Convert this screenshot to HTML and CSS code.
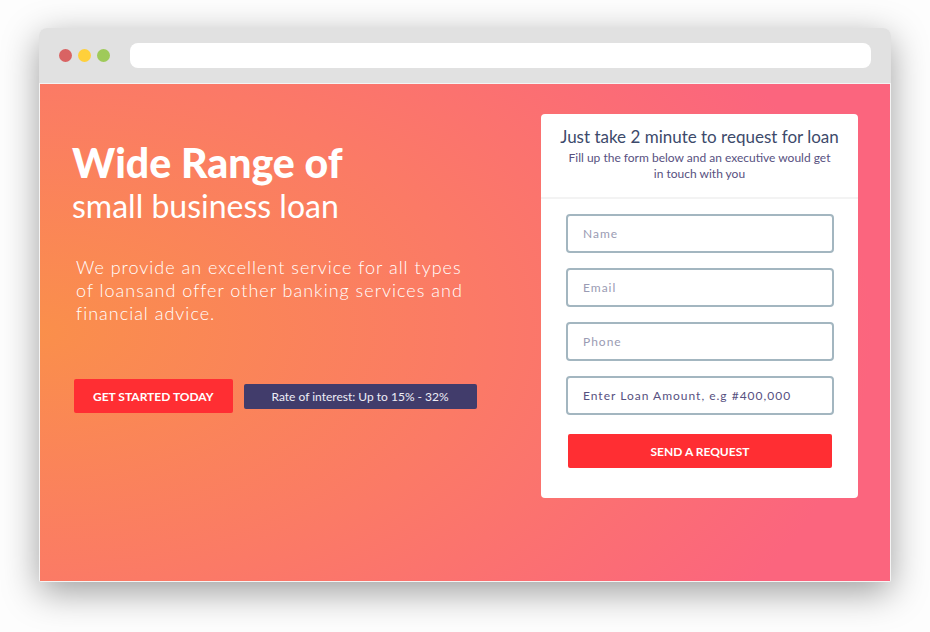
FILE: index.html
```html
<!DOCTYPE html>
<html lang="en">
<head>
<meta charset="utf-8">
<title>Small business loan</title>
<link rel="stylesheet" href="styles.css">
</head>
<body>
<div class="window">
  <header class="toolbar">
    <div class="lights">
      <span class="light light-close"></span>
      <span class="light light-minimize"></span>
      <span class="light light-expand"></span>
    </div>
    <input class="address" type="text" aria-label="Address">
  </header>
  <main class="hero">
    <section class="intro">
      <h1 class="title"><strong class="title-strong">Wide Range of</strong> small business loan</h1>
      <p class="lead">We provide an excellent service for all types<br>of loansand offer other banking services and<br>financial advice.</p>
      <div class="actions">
        <button class="button" type="button">GET STARTED TODAY</button>
        <p class="rate">Rate of interest: Up to 15% - 32%</p>
      </div>
    </section>
    <form class="card">
      <div class="card-head">
        <h2 class="card-title">Just take 2 minute to request for loan</h2>
        <p class="card-text">Fill up the form below and an executive would get in touch with you</p>
      </div>
      <div class="fields">
        <input class="field" type="text" placeholder="Name" aria-label="Name">
        <input class="field" type="email" placeholder="Email" aria-label="Email">
        <input class="field" type="tel" placeholder="Phone" aria-label="Phone">
        <input class="field field-amount" type="text" placeholder="Enter Loan Amount, e.g #400,000" aria-label="Loan amount">
        <button class="button button-send" type="submit">SEND A REQUEST</button>
      </div>
    </form>
  </main>
</div>
</body>
</html>
```
FILE: styles.css
```css
* {
  box-sizing: border-box;
}

body {
  display: flex;
  min-height: 100vh;
  margin: 0;
  padding: 28px 39px 50px;
  background: #fdfdfd;
  font-family: Lato, "Liberation Sans", sans-serif;
}

.window {
  display: flex;
  flex: 1;
  flex-direction: column;
  border-radius: 8px 8px 2px 2px;
  background: #f4f4f4;
  box-shadow: 0 10px 36px rgba(0, 0, 0, 0.38);
}

.toolbar {
  display: flex;
  align-items: center;
  gap: 20px;
  height: 55px;
  padding: 0 20px;
  border-radius: 8px 8px 0 0;
  background: #e1e1e1;
}

.lights {
  display: flex;
  gap: 6px;
}

.light {
  width: 13px;
  height: 13px;
  border-radius: 50%;
}

.light-close {
  background: #d96363;
}

.light-minimize {
  background: #ffd03b;
}

.light-expand {
  background: #9fca5a;
}

.address {
  flex: 1;
  min-width: 0;
  height: 25px;
  padding: 0 12px;
  border: 0;
  border-radius: 8px;
  background: #fff;
}

.hero {
  display: flex;
  flex: 1;
  justify-content: space-between;
  align-items: flex-start;
  gap: 32px;
  margin: 1px;
  padding: 30px 32px;
  background: radial-gradient(98% 98% at 0 50%, #fa8f4b 0%, #fb7a66 52%, #fb657e 100%);
}

.intro {
  padding-top: 25px;
  color: #fff;
}

.title {
  margin: 0;
  font-size: 32px;
  font-weight: 400;
  line-height: 38px;
}

.title-strong {
  display: block;
  font-size: 41px;
  font-weight: 900;
  line-height: 48px;
}

.lead {
  margin: 31px 4px 0;
  font-size: 18px;
  font-weight: 300;
  letter-spacing: 1px;
  line-height: 23px;
  color: #fff;
}

.actions {
  display: flex;
  align-items: center;
  gap: 11px;
  margin: 54px 2px 0;
}

.button {
  height: 34px;
  padding: 0 19px;
  border: 0;
  border-radius: 2px;
  background: #ff2e33;
  color: #fff;
  font-family: inherit;
  font-size: 12px;
  font-weight: 700;
}

.rate {
  width: 233px;
  margin: 0;
  border-radius: 2px;
  background: #413c6b;
  color: #eeedf6;
  font-size: 12px;
  line-height: 25px;
  text-align: center;
}

.card {
  width: 317px;
  border-radius: 4px;
  background: #fff;
}

.card-head {
  padding: 12px 16px 15px;
  border-bottom: 2px solid #f3f3f3;
  text-align: center;
}

.card-title {
  margin: 0;
  color: #3d4a6b;
  font-size: 17px;
  font-weight: 400;
  line-height: 22px;
}

.card-text {
  margin: 2px 0 0;
  padding: 0 8px;
  color: #57517f;
  font-size: 12px;
  line-height: 16px;
}

.fields {
  display: flex;
  flex-direction: column;
  gap: 15px;
  padding: 15px 24px 30px 25px;
}

.field {
  width: 100%;
  height: 39px;
  padding: 0 15px;
  border: 2px solid #a3b6c0;
  border-radius: 4px;
  background: #fff;
  color: #57517f;
  font-family: inherit;
  font-size: 12px;
  letter-spacing: 1px;
}

.field::placeholder {
  color: #9a9bb3;
  opacity: 1;
}

.field-amount::placeholder {
  color: #57517f;
}

.button-send {
  margin: 4px 2px 0;
}
```
